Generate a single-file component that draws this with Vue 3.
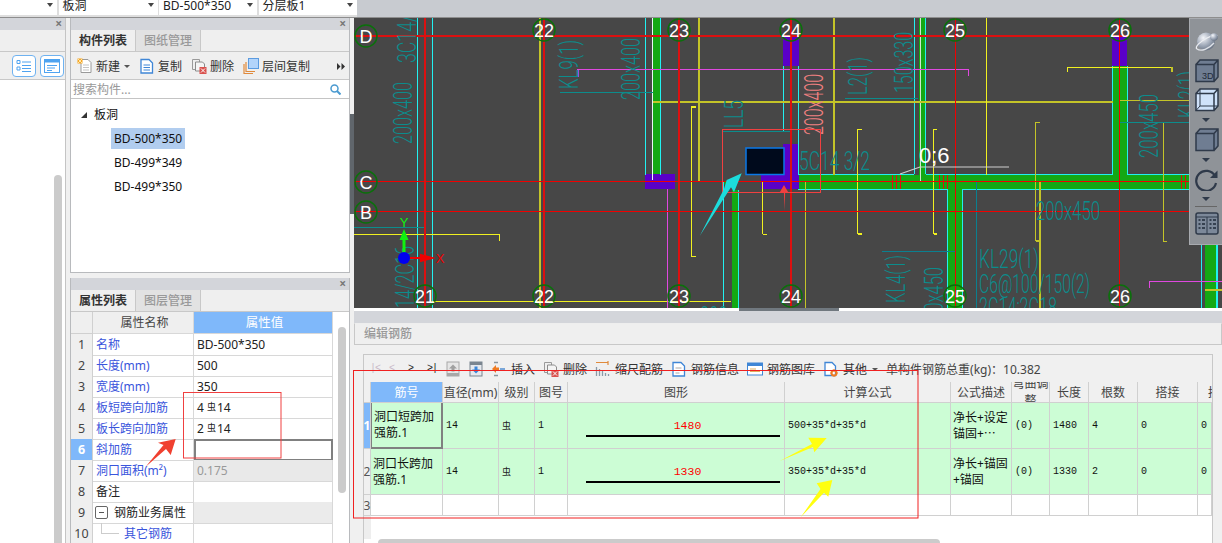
<script setup>
const red = "#dc1010";
const cyan = "#22f0f0";
const yellow = "#f0f020";
const olive = "#c4c428";
const teal = "#0c8c8c";
const pink = "#e048e0";

const dropdowns = [
  { text: "", w: 57 },
  { text: "板洞", w: 99 },
  { text: "BD-500*350", w: 98 },
  { text: "分层板1", w: 98 },
];

const icons = {
  add: '<path d="M4 1.5h7l3 3v10H4z" fill="#fff" stroke="#9a9a9a"/><path d="M6 7h6M6 9.500h6M6 12h6" stroke="#c4c4c4"/><rect x="0.500" y="0.500" width="5" height="5" fill="#f6a623"/><path d="M1 1l4 4M5 1L1 5" stroke="#ffe6a8"/>',
  copy: '<path d="M2 1.500h8l3.500 3.500v10H2z" fill="#fff" stroke="#3f86d6" stroke-width="1.300"/><path d="M4.500 7h6.500M4.500 9.500h6.500M4.500 12h6.500" stroke="#3f86d6"/>',
  del: '<path d="M1.500 1.500h7v10h-7z" fill="none" stroke="#9a9a9a"/><path d="M4.500 4h7l2 2v7h-9z" fill="#f4f4f4" stroke="#8c8c8c"/><rect x="8.500" y="9" width="7" height="7" fill="#d9534f"/><path d="M10 10.500l4 4M14 10.500l-4 4" stroke="#fff"/>',
  floor: '<path d="M1 6v9.500h9M3 4v9.500h9" fill="none" stroke="#e08a3c" stroke-width="1.200"/><rect x="5.500" y="0.500" width="10" height="10" fill="#b3d4fa" stroke="#5b9be0"/>',
  up: '<rect x="1" y="1" width="12" height="14" fill="#e6e6e6" stroke="#a8a8a8"/><rect x="1" y="12" width="12" height="3" fill="#a8a8a8"/><path d="M7 3.500l4 4H8.500v3h-3v-3H3z" fill="#a0a0a0"/>',
  down: '<rect x="1" y="1" width="12" height="14" fill="#e6e9ee" stroke="#7a8590"/><rect x="1" y="1" width="12" height="3" fill="#7a8590"/><path d="M7 12.500l4-4H8.500v-3h-3v3H3z" fill="#3b86d8"/>',
  insert: '<path d="M3 1.500h4M3 14.500h4" stroke="#8a96a0" stroke-width="1.300"/><path d="M1 8l4-4v2.500h3v3H5V12z" fill="#ef7b22"/><path d="M9 8h5" stroke="#7aa6d8" stroke-width="2"/>',
  scale: '<path d="M1 1.500h12M13 0v4" stroke="#e08a3c" stroke-width="1.200"/><path d="M1.500 6v9M4.500 8v7M7.500 10v5M10.500 12v3M13.500 13v2" stroke="#8a9aa8" stroke-width="1.300"/>',
  info: '<path d="M2 1.500h8l3.500 3.500v10H2z" fill="#fff" stroke="#3f86d6" stroke-width="1.300"/><path d="M4.500 7h6M4.500 9.500h6M4.500 12h4" stroke="#a8a8a8"/>',
  lib: '<rect x="0.500" y="2" width="15" height="12" fill="#fff" stroke="#3f86d6"/><rect x="0.500" y="2" width="15" height="3" fill="#3f86d6"/><path d="M3 8h6M3 10.500h10" stroke="#e0b060"/>',
  other: '<path d="M2 1.500h7l3.500 3.500v9.500H2z" fill="#fff" stroke="#3f86d6" stroke-width="1.300"/><circle cx="11" cy="12" r="2.500" fill="none" stroke="#ef7b22" stroke-width="2"/><path d="M11 8.500v1M11 14.500v1M7.500 12h1M13.500 12h1" stroke="#ef7b22" stroke-width="1.500"/>',
};

const compTools = [
  { icon: "add", text: "新建", caret: true },
  { icon: "copy", text: "复制" },
  { icon: "del", text: "删除" },
  { icon: "floor", text: "层间复制" },
];

const barTools = [
  { icon: "insert", text: "插入" },
  { icon: "del", text: "删除" },
  { icon: "scale", text: "缩尺配筋" },
  { icon: "info", text: "钢筋信息" },
  { icon: "lib", text: "钢筋图库" },
  { icon: "other", text: "其他", caret: true },
];

const attrs = [
  { name: "名称", value: "BD-500*350", blue: true },
  { name: "长度(mm)", value: "500", blue: true },
  { name: "宽度(mm)", value: "350", blue: true },
  { name: "板短跨向加筋", before: "4", after: "14", blue: true },
  { name: "板长跨向加筋", before: "2", after: "14", blue: true },
  { name: "斜加筋", value: "", blue: true, active: true },
  { name: "洞口面积(m²)", value: "0.175", blue: true, locked: true },
  { name: "备注", value: "" },
  { name: "钢筋业务属性", value: "", group: true },
  { name: "其它钢筋", value: "", blue: true, child: true },
];

const headers = ["", "筋号", "直径(mm)", "级别", "图号", "图形", "计算公式", "公式描述", "弯曲调整", "长度", "根数", "搭接", "损耗"];

const bars = [
  { id: 1, name: "洞口短跨加强筋.1", dia: "14", no: "1", len: "1480", formula: "500+35*d+35*d", desc: "净长+设定锚固+⋯", adj: "(0)", count: "4" },
  { id: 2, name: "洞口长跨加强筋.1", dia: "14", no: "1", len: "1330", formula: "350+35*d+35*d", desc: "净长+锚固+锚固", adj: "(0)", count: "2" },
];

// drawing, in page coordinates: x1 y1 x2 y2 colour width
const lines = [
  [417.5, 18, 417.5, 308, cyan, 1], [432.5, 18, 432.5, 308, cyan, 1],
  [645.5, 18, 645.5, 175, cyan, 1], [652, 18, 652, 180, "#e8f8f8", 1], [660.5, 18, 660.5, 175, cyan, 1],
  [723.5, 182, 723.5, 308, cyan, 1], [738.5, 190, 738.5, 308, cyan, 1],
  [783.5, 66, 783.5, 132, cyan, 1], [798.5, 66, 798.5, 175, cyan, 1],
  [914.5, 18, 914.5, 174, cyan, 1], [925.5, 18, 925.5, 174, cyan, 1], [920, 18, 920, 181, "#d0e8d0", 1],
  [1112.5, 66, 1112.5, 175, cyan, 1], [1127.5, 66, 1127.5, 175, cyan, 1],
  [947.5, 189, 947.5, 308, cyan, 1.5], [962.5, 189, 962.5, 308, cyan, 1.5],
  [798, 174.5, 914, 174.5, cyan, 1], [926, 174.5, 1112, 174.5, cyan, 1], [1128, 174.5, 1189, 174.5, cyan, 1],
  [798, 189.5, 947, 189.5, cyan, 1], [963, 189.5, 1189, 189.5, cyan, 1],
  [1201.5, 245, 1201.5, 308, cyan, 1.5], [1217, 245, 1217, 308, cyan, 1.5],

  [540, 18, 540, 308, olive, 2], [699, 18, 699, 181, olive, 1.5], [834, 18, 834, 175, olive, 1.5],
  [653, 102, 1113, 102, olive, 1.5], [1120, 100.5, 1189, 100.5, olive, 1.5],
  [986.5, 18, 986.5, 175, yellow, 1],
  [805.5, 182, 805.5, 308, olive, 1.5], [1040, 182, 1040, 308, olive, 1.5],
  [1035.5, 122, 1035.5, 241, olive, 1.5], [1035.5, 122.5, 1040, 122.5, olive, 1.5], [1035.5, 241, 1040, 241, olive, 1.5],
  [1163.5, 122, 1163.5, 241, olive, 1.5], [1163, 122, 1167, 122, olive, 1], [1163, 241, 1167, 241, olive, 1],
  [857.5, 129, 857.5, 234, yellow, 1], [857.5, 129.5, 862, 129.5, yellow, 1], [857.5, 234, 862, 234, yellow, 1.5],
  [933.5, 129, 933.5, 234, yellow, 1], [933.5, 129.5, 937, 129.5, yellow, 1], [933.5, 234, 937, 234, yellow, 1.5],
  [691.5, 107, 691.5, 256, yellow, 1], [691, 107, 696, 107, yellow, 1.5], [691, 256.5, 696, 256.5, yellow, 1],
  [762.5, 182, 762.5, 234, yellow, 1], [762.5, 234, 767, 234, yellow, 1],
  [1067, 67.5, 1172, 67.5, yellow, 1], [1067.5, 67, 1067.5, 72, yellow, 1], [1172, 67, 1172, 72, olive, 1.5],
  [354, 234.5, 500, 234.5, yellow, 1], [499.5, 234, 499.5, 241, yellow, 1],
  [432, 301.5, 731, 301.5, yellow, 1], [1205, 290, 1222, 290, olive, 1.5],

  [578, 69.5, 968, 69.5, pink, 1], [578, 69, 578, 77, pink, 1.5], [968.5, 69, 968.5, 76, pink, 1],
  [667.5, 189, 667.5, 308, pink, 1], [1150, 281.5, 1222, 281.5, pink, 1], [1149.5, 281, 1149.5, 288, pink, 1],

  [560, 92.5, 653, 92.5, teal, 1], [845, 98.5, 918, 98.5, teal, 1], [354, 227.5, 425, 227.5, teal, 1],
  [722, 131.5, 790, 131.5, teal, 1], [1120, 122.5, 1189, 122.5, teal, 1],
  [976.5, 182, 976.5, 308, "#0a8090", 1], [882, 251.5, 955, 251.5, "#0a8090", 1],

  [354, 36, 1189, 36, red, 2], [354, 181.5, 1189, 181.5, "#f00000", 1], [354, 211.5, 1189, 211.5, "#f00000", 1],
  [425, 18, 425, 308, red, 2], [544, 18, 544, 308, red, 2], [679, 18, 679, 308, red, 2],
  [791, 18, 791, 308, red, 2], [955.5, 18, 955.5, 308, "#f00000", 1], [1119.5, 18, 1119.5, 308, "#f00000", 1],

  [892, 175, 892, 189, red, 1], [896, 175, 896, 189, red, 1], [900, 175, 900, 189, red, 1],
  [939.5, 175, 939.5, 189, red, 1], [943.5, 175, 943.5, 189, red, 1], [947.5, 175, 947.5, 189, red, 1],
  [1181.5, 175, 1181.5, 189, red, 1], [1185.5, 175, 1185.5, 189, red, 1],
];

const fills = [
  [653, 18, 8, 157, "#14a814"], [919, 18, 7, 157, "#14a814"], [1113, 66, 14, 109, "#14a814"],
  [799, 175, 390, 14, "#14a814"], [948, 189, 15, 119, "#14a814"], [732, 190, 6, 118, "#14a814"],
  [1205, 245, 11, 63, "#14a814"],
  [645, 174, 30, 15, "#5a00c8"], [783, 36, 16, 30, "#5a00c8"], [783, 144, 16, 45, "#5a00c8"],
  [761, 174, 30, 15, "#5a00c8"], [1112, 36, 15, 30, "#5a00c8"],
];

const tallText = [
  { t: "200x400", x: 412, y: 144, len: 62 },
  { t: "3C14/", x: 416, y: 63, len: 48 },
  { t: "14/2C16", x: 414, y: 308, len: 62 },
  { t: "KL9(1)", x: 578, y: 89, len: 49 },
  { t: "200x400", x: 640, y: 100, len: 62 },
  { t: "LL5", x: 743, y: 128, len: 28 },
  { t: "200x400", x: 823, y: 135, len: 61, fill: "#f08080" },
  { t: "L2(1)", x: 867, y: 95, len: 38 },
  { t: "150x330", x: 913, y: 93, len: 61 },
  { t: "KL2(1)", x: 1197, y: 118, len: 47 },
  { t: "200x450", x: 1158, y: 158, len: 64 },
  { t: "KL4(1)", x: 905, y: 303, len: 48 },
  { t: "200x450", x: 943, y: 330, len: 63 },
];

const flatText = [
  { t: "5C14 3/2", x: 799, y: 170, len: 71 },
  { t: "200x450", x: 1036, y: 220, len: 64 },
  { t: "KL29(1)", x: 979, y: 268, len: 60 },
  { t: "C6@100/150(2)", x: 979, y: 293, len: 111 },
  { t: "2C14;2C18", x: 979, y: 316, len: 78 },
  { t: "200x", x: 700, y: 325, len: 36 },
];

const bubbles = [
  { t: "22", x: 544, y: 30 }, { t: "23", x: 679, y: 30 }, { t: "24", x: 791, y: 30 }, { t: "25", x: 955, y: 30 }, { t: "26", x: 1120, y: 30 },
  { t: "21", x: 425, y: 296 }, { t: "22", x: 544, y: 296 }, { t: "23", x: 679, y: 296 }, { t: "24", x: 791, y: 296 }, { t: "25", x: 955, y: 296 }, { t: "26", x: 1120, y: 296 },
  { t: "D", x: 366, y: 36 }, { t: "C", x: 366, y: 182 }, { t: "B", x: 366, y: 212 },
];
</script>

<template>
  <div class="app">
    <div class="topbar">
      <div class="dd-group">
        <div v-for="d in dropdowns" :key="d.w + d.text" class="dd" :style="{ width: d.w + 'px' }">
          <span>{{ d.text }}</span><i class="caret"></i>
        </div>
      </div>
    </div>

    <div class="main">
      <div class="stub">
        <div class="title"><span class="close">×</span></div>
        <div class="stub-tabs"></div>
        <div class="stub-tools">
          <button class="view-btn">
            <svg width="16" height="14" viewBox="0 0 16 14"><path d="M1 1.500h3v3H1zM1 8h3v3H1z" fill="none" stroke="#4fa3f0"/><path d="M6 3h9M6 9.500h9M6 6.500h9M6 12.500h9" stroke="#4fa3f0"/></svg>
          </button>
          <button class="view-btn">
            <svg width="16" height="14" viewBox="0 0 16 14"><rect x="0.500" y="0.500" width="15" height="13" fill="none" stroke="#4fa3f0"/><rect x="0.500" y="0.500" width="15" height="3" fill="#4fa3f0"/><path d="M3 6.500h10M3 9h8M3 11.500h5" stroke="#4fa3f0"/></svg>
          </button>
        </div>
        <div class="stub-body"><div class="stub-thumb"></div></div>
      </div>

      <div class="side">
        <section class="panel comp-panel">
          <div class="title"><span class="close">×</span></div>
          <div class="tabs">
            <span class="tab on">构件列表</span><span class="tab">图纸管理</span>
          </div>
          <div class="comp-tools">
            <div v-for="t in compTools" :key="t.text" class="tool">
              <svg width="16" height="16" viewBox="0 0 16 16" v-html="icons[t.icon]"></svg>
              <span>{{ t.text }}</span>
              <i v-if="t.caret" class="caret small"></i>
            </div>
            <svg class="more" width="8" height="7" viewBox="0 0 8 7"><path d="M0 0l3.500 3.500L0 7zM4.500 0L8 3.500 4.500 7z" fill="#333"/></svg>
          </div>
          <div class="search">
            <span>搜索构件...</span>
            <svg width="11" height="11" viewBox="0 0 11 11"><circle cx="4.500" cy="4.500" r="3.500" fill="none" stroke="#4a9ad0" stroke-width="1.500"/><path d="M7 7l3.500 3.500" stroke="#4a9ad0" stroke-width="2"/></svg>
          </div>
          <div class="tree">
            <div class="tree-root"><i class="tri"></i>板洞</div>
            <div class="tree-item"><span class="sel">BD-500*350</span></div>
            <div class="tree-item"><span>BD-499*349</span></div>
            <div class="tree-item"><span>BD-499*350</span></div>
          </div>
        </section>

        <section class="panel attr-panel">
          <div class="title"><span class="close">×</span></div>
          <div class="tabs">
            <span class="tab on">属性列表</span><span class="tab">图层管理</span>
          </div>
          <div class="attr-wrap">
            <div class="attr-table">
              <div class="attr-row head">
                <div class="idx"></div>
                <div class="cell nm">属性名称</div>
                <div class="cell val-head">属性值</div>
              </div>
              <div v-for="(a, i) in attrs" :key="a.name" class="attr-row">
                <div class="idx" :class="{ 'idx-on': a.active }">{{ i + 1 }}</div>
                <div class="cell name" :class="{ blue: a.blue, group: a.group, child: a.child }">
                  <i v-if="a.group" class="minus"></i>
                  <i v-if="a.child" class="branch"></i>
                  {{ a.name }}
                </div>
                <div class="cell value" :class="{ active: a.active, locked: a.locked, 'group-val': a.group }">
                  <template v-if="a.before">{{ a.before }}<span class="steel">虫</span>{{ a.after }}</template>
                  <template v-else>{{ a.value }}</template>
                </div>
              </div>
            </div>
            <div class="attr-scroll"><div class="attr-thumb"></div></div>
          </div>
        </section>
      </div>

      <div class="splitter"><div class="grip"></div></div>

      <div class="work">
        <div class="canvas">
          <svg class="drawing" width="868" height="290" viewBox="354 18 868 290">
            <rect x="354" y="18" width="868" height="290" fill="#474747" />
            <rect v-for="(f, i) in fills" :key="'f' + i" :x="f[0]" :y="f[1]" :width="f[2]" :height="f[3]" :fill="f[4]" />
            <line v-for="(l, i) in lines" :key="'l' + i" :x1="l[0]" :y1="l[1]" :x2="l[2]" :y2="l[3]" :stroke="l[4]" :stroke-width="l[5]" shape-rendering="crispEdges" />
            <path d="M900 174l20-7h89" fill="none" stroke="#d0d0d0" stroke-width="1.200" />
            <rect x="746" y="148" width="38" height="26.500" fill="#000a1c" stroke="#0a78e8" stroke-width="1.500" />
            <path d="M724 182l6-1.500-4 8z" fill="#14a814" />

            <g class="cad-text">
              <text v-for="(r, i) in tallText" :key="'r' + i" :transform="`translate(${r.x} ${r.y}) rotate(-90)`" :textLength="r.len" lengthAdjust="spacingAndGlyphs" :fill="r.fill || teal">{{ r.t }}</text>
              <text v-for="(r, i) in flatText" :key="'t' + i" :x="r.x" :y="r.y" :textLength="r.len" lengthAdjust="spacingAndGlyphs" :fill="teal">{{ r.t }}</text>
            </g>

            <g v-for="b in bubbles" :key="b.t + b.x + b.y">
              <circle :cx="b.x" :cy="b.y" r="11" fill="none" stroke="#0a700a" stroke-width="1.500" />
              <text class="bubble" :x="b.x" :y="b.y + 6.500" text-anchor="middle">{{ b.t }}</text>
            </g>

            <text class="dim" x="919" y="163">0;6</text>

            <path d="M402.500 258v-18h-3l4.500-11 4.500 11h-3v18z" fill="#10f010" />
            <path d="M404 258h17v-3l11 3-11 3v-3z" fill="#f00000" stroke="#f00000" stroke-width="2" />
            <circle cx="404" cy="258" r="6" fill="#0000f0" />
            <text class="axis" x="404" y="227" text-anchor="middle" fill="#10f010">Y</text>
            <text class="axis" x="440" y="263" text-anchor="middle" fill="#f00000">X</text>

            <rect x="722.500" y="129.500" width="98" height="63" fill="none" stroke="#f04040" />
            <path d="M699.700 236L724 189l2.700-9 15-6.700-7.700 19-3-5z" fill="#1cdcdc" />
            <path d="M784.700 210.700l-.8-18h-4.400l4.500-7.700 4.500 7.700h-3.400z" fill="#f04040" />
          </svg>

          <div class="view-tools">
            <svg width="24" height="22" viewBox="0 0 24 22">
              <defs>
                <radialGradient id="ball" cx=".35" cy=".3" r=".85">
                  <stop offset="0" stop-color="#f4f6fa" />
                  <stop offset=".55" stop-color="#98a2b2" />
                  <stop offset="1" stop-color="#566070" />
                </radialGradient>
              </defs>
              <circle cx="11" cy="11.500" r="9" fill="url(#ball)" />
              <path d="M2 19c-3-2 4-8 10-11s10-4 10-2" fill="none" stroke="#eceef2" stroke-width="1.300" />
              <path d="M2 19c4 3 12 0 17-6" fill="none" stroke="#dfe2e8" stroke-width="1.300" />
              <circle cx="19" cy="7" r="3.800" fill="url(#ball)" />
            </svg>
            <svg width="24" height="24" viewBox="0 0 24 24"><path d="M1 5.500h18v17H1zM1 5.500l4-4.500h18v17l-4 4.500M19 5.500L23 1" fill="#6f7d92" stroke="#2f3a4a" stroke-width="1.500"/><text x="7" y="20" class="box-text">3D</text></svg>
            <svg width="24" height="24" viewBox="0 0 24 24"><path d="M1 5.500h18v17H1zM1 5.500l4-4.500h18v17l-4 4.500M19 5.500L23 1" fill="#cfe2fa" stroke="#2f3a4a" stroke-width="1.500"/><path d="M1 22.500l4-4.500h18M5 1v17" fill="none" stroke="#2f3a4a"/></svg>
            <i class="tb-caret"></i>
            <svg width="24" height="24" viewBox="0 0 24 24"><path d="M1 5.500h18v17H1zM1 5.500l4-4.500h18v17l-4 4.500M19 5.500L23 1" fill="#6f7d92" stroke="#2f3a4a" stroke-width="1.500"/></svg>
            <i class="tb-caret"></i>
            <svg width="24" height="22" viewBox="0 0 24 22"><path d="M20 7a10 10 0 1 0 1 7" fill="none" stroke="#2f3a4a" stroke-width="2.200"/><path d="M22.500 1.500v7.500h-7.500z" fill="#2f3a4a"/></svg>
            <i class="tb-caret"></i>
            <div class="tb-sep"></div>
            <svg width="24" height="23" viewBox="0 0 24 23"><rect x="1" y="1" width="22" height="21" rx="2" fill="#7c8899" stroke="#2f3a4a" stroke-width="1.500"/><path d="M1 5h22M12 5v17" stroke="#2f3a4a"/><path d="M3.500 8h2M7 8h3M3.500 12h2M7 12h3M3.500 16h2M7 16h3M14.500 8h2M18 8h3M14.500 12h2M18 12h3M14.500 16h2M18 16h3" stroke="#1f2a38" stroke-width="1.300"/></svg>
          </div>
        </div>

        <div class="hbar"><div class="hgrip"></div></div>
        <div class="title small-title"></div>
        <div class="edit-name">编辑钢筋</div>

        <div class="edit-body">
          <div class="frame">
            <div class="bar-tools">
              <span class="nav dim-nav">|&lt;</span>
              <span class="nav dim-nav">&lt;</span>
              <span class="nav">&gt;</span>
              <span class="nav">&gt;|</span>
              <svg width="14" height="16" viewBox="0 0 14 16" v-html="icons.up"></svg>
              <svg width="14" height="16" viewBox="0 0 14 16" v-html="icons.down"></svg>
              <div v-for="t in barTools" :key="t.text + t.icon" class="tool">
                <svg width="16" height="16" viewBox="0 0 16 16" v-html="icons[t.icon]"></svg>
                <span>{{ t.text }}</span>
                <i v-if="t.caret" class="caret small"></i>
              </div>
              <span class="total">单构件钢筋总重(kg)：10.382</span>
            </div>

            <div class="g-row g-head">
              <div v-for="(h, i) in headers" :key="i" class="g-cell" :class="{ 'g-active': i === 1, 'g-wrap': i === 8, 'g-cut': i === 12 }">
                <span>{{ h }}</span>
              </div>
            </div>

            <div v-for="(b, i) in bars" :key="b.id" class="g-row g-data">
              <div class="g-cell g-idx" :class="{ 'idx-on': i === 0 }">{{ b.id }}</div>
              <div class="g-cell g-name" :class="{ 'g-sel': i === 0 }">{{ b.name }}</div>
              <div class="g-cell mono">{{ b.dia }}</div>
              <div class="g-cell"><span class="steel flat">虫</span></div>
              <div class="g-cell mono">{{ b.no }}</div>
              <div class="g-cell g-shape">
                <span class="shape-len">{{ b.len }}</span>
                <i class="shape-line"></i>
              </div>
              <div class="g-cell mono">{{ b.formula }}</div>
              <div class="g-cell g-name">{{ b.desc }}</div>
              <div class="g-cell mono">{{ b.adj }}</div>
              <div class="g-cell mono">{{ b.len }}</div>
              <div class="g-cell mono">{{ b.count }}</div>
              <div class="g-cell mono">0</div>
              <div class="g-cell mono">0</div>
            </div>

            <div class="g-row g-empty">
              <div class="g-cell g-idx">3</div>
              <div v-for="n in 12" :key="n" class="g-cell"></div>
            </div>

            <div class="filler"></div>
            <div class="frame-scroll"></div>
          </div>
        </div>
      </div>
    </div>

    <svg class="notes" width="1222" height="543" viewBox="0 0 1222 543">
      <rect x="183.500" y="392.500" width="97.500" height="65.500" fill="none" stroke="#f04040" />
      <rect x="353.500" y="370.500" width="564.500" height="147.500" fill="none" stroke="#f02020" />
      <path d="M145.700 466.700L163.500 445l-5.500-2.300 17.700-3.700-5 16-4.700-6z" fill="#f04030" />
      <path d="M779.700 461L812 444l-3.700-6.300 18.400.3-12.400 14.300-1.300-5.300z" fill="#ffff10" />
      <path d="M800.700 517.300L820.500 489l-3.800-5.700 15.600-3.300-4 16.700-4.300-4z" fill="#ffff10" />
    </svg>
  </div>
</template>

<style scoped>
.app {
  position: relative;
  width: 1222px;
  height: 543px;
  overflow: hidden;
  display: flex;
  flex-direction: column;
  background: #f0f0f0;
  color: #222;
  font: 12px "Noto Sans", "Noto Sans CJK SC", sans-serif;
}

.topbar {
  height: 18px;
  flex: none;
  background: #c8cbd0;
  border-bottom: 1px solid #8e8e8e;
  box-sizing: border-box;
}
.dd-group {
  width: 357px;
  height: 17px;
  display: flex;
  gap: 1.500px;
  background: #dedede;
  padding-bottom: 2px;
  box-sizing: border-box;
}
.dd {
  height: 15px;
  background: #fff;
  padding-left: 4px;
  box-sizing: border-box;
  display: flex;
  align-items: center;
  justify-content: space-between;
  line-height: 10px;
  overflow: hidden;
}
.dd span {
  position: relative;
  top: -2px;
}
.caret {
  width: 0;
  height: 0;
  border: 3.500px solid transparent;
  border-top: 4px solid #444;
  border-bottom: 0;
  margin: -6px 4px 0 0;
}
.caret.small {
  border-width: 3px 3px 0;
  border-top-color: #555;
  margin: 1px 0 0 1px;
}

.main {
  flex: 1;
  min-height: 0;
  display: flex;
}

.title {
  height: 12px;
  flex: none;
  background: #d3d5da;
  display: flex;
  justify-content: flex-end;
  align-items: center;
  padding-right: 3px;
}
.close {
  color: #777;
  font-size: 12px;
  font-weight: 700;
  line-height: 12px;
}

.stub {
  width: 66px;
  flex: none;
  display: flex;
  flex-direction: column;
  border-right: 1px solid #c4c4c4;
  box-sizing: border-box;
  background: #fff;
}
.stub-tabs {
  height: 21px;
  flex: none;
  background: #efefef;
  border-bottom: 1px solid #c8c8c8;
}
.stub-tools {
  height: 28px;
  flex: none;
  background: #efefef;
  border-bottom: 1px solid #c8c8c8;
  padding: 3px 0 0 12px;
  display: flex;
  gap: 4px;
  box-sizing: border-box;
}
.view-btn {
  width: 24px;
  height: 22px;
  padding: 0;
  background: #fff;
  border: 1px solid #6fb2f0;
  border-radius: 4px;
  display: flex;
  align-items: center;
  justify-content: center;
}
.stub-body {
  flex: 1;
  min-height: 0;
  overflow: hidden;
  padding: 95px 0 0 54px;
}
.stub-thumb {
  width: 8px;
  height: 400px;
  background: #cbcbcb;
  border-radius: 4px;
}

.side {
  width: 280px;
  flex: none;
  margin-left: 4px;
  display: flex;
  flex-direction: column;
  gap: 5px;
}
.panel {
  border: 1px solid #b8babd;
  border-top: 0;
  box-sizing: border-box;
  display: flex;
  flex-direction: column;
  background: #fff;
}
.comp-panel {
  height: 255px;
}
.attr-panel {
  flex: 1;
  min-height: 0;
  border-bottom: 0;
}

.tabs {
  height: 22px;
  flex: none;
  display: flex;
  background: #efefef;
  border-bottom: 1px solid #c8c8c8;
  box-sizing: border-box;
}
.tab {
  width: 65px;
  text-align: center;
  line-height: 21px;
  color: #999;
  font-weight: 500;
  background: #e2e2e2;
  border-right: 1px solid #c8c8c8;
  box-sizing: border-box;
}
.tab.on {
  color: #333;
  background: #efefef;
  font-weight: 700;
}

.comp-tools {
  height: 28px;
  flex: none;
  background: #efefef;
  border-bottom: 1px solid #c8c8c8;
  box-sizing: border-box;
  display: flex;
  align-items: center;
  gap: 9px;
  padding: 1px 0 0 6px;
}
.tool {
  display: flex;
  align-items: center;
  gap: 3px;
  color: #333;
}
.more {
  margin-left: auto;
  margin-right: 4px;
}

.search {
  height: 19px;
  flex: none;
  border-bottom: 1px solid #c4c4c4;
  box-sizing: border-box;
  display: flex;
  align-items: center;
  justify-content: space-between;
  padding: 0 8px 0 2px;
  color: #999;
}

.tree {
  flex: 1;
  padding-top: 5px;
  color: #111;
}
.tree-root {
  height: 22px;
  line-height: 22px;
  padding-left: 10px;
  display: flex;
  align-items: center;
  gap: 7px;
}
.tri {
  width: 0;
  height: 0;
  border-left: 6px solid transparent;
  border-bottom: 6px solid #333;
}
.tree-item {
  height: 24px;
  padding-left: 40px;
  display: flex;
  align-items: center;
}
.tree-item span {
  padding: 0 3px;
  height: 21px;
  line-height: 21px;
}
.tree-item .sel {
  background: #b1cdef;
}

.attr-wrap {
  flex: 1;
  min-height: 0;
  display: flex;
  overflow: hidden;
}
.attr-table {
  width: 262px;
  flex: none;
}
.attr-row {
  display: grid;
  grid-template-columns: 22px 101px 139px;
  height: 21px;
}
.attr-row.head {
  height: 22px;
}
.idx {
  background: #efefef;
  border-right: 1px solid #d0d0d0;
  border-bottom: 1px solid #d0d0d0;
  text-align: center;
  line-height: 21px;
  font-size: 12.500px;
  color: #444;
  box-sizing: border-box;
}
.idx-on {
  background: #7fb8fa;
  color: #fff;
  font-weight: 700;
}
.cell {
  border-right: 1px solid #d8d8d8;
  border-bottom: 1px solid #d8d8d8;
  box-sizing: border-box;
  line-height: 21px;
  padding-left: 3px;
  white-space: nowrap;
  overflow: hidden;
}
.nm {
  background: #efefef;
  text-align: center;
  color: #444;
}
.val-head {
  background: #7fb8fa;
  color: #fff;
  text-align: center;
  font-size: 12.500px;
}
.name.blue {
  color: #3a55dc;
}
.name.group {
  display: flex;
  align-items: center;
  gap: 6px;
  padding-left: 2px;
}
.name.child {
  padding-left: 31px;
  position: relative;
}
.minus {
  width: 11px;
  height: 11px;
  border: 1px solid #666;
  border-radius: 2px;
  flex: none;
  background: linear-gradient(#555, #555) center / 5px 1px no-repeat;
}
.branch {
  position: absolute;
  left: 8px;
  top: 0;
  width: 17px;
  height: 10px;
  border-left: 1px solid #ccc;
  border-bottom: 1px solid #ccc;
}
.value.active {
  border: 2px solid #808080;
}
.value.locked {
  background: #e9e9e9;
  color: #999;
}
.value.group-val {
  background: #ebebeb;
}
.steel {
  font-size: 9px;
  position: relative;
  top: -2px;
  margin: 0 1px 0 3px;
}
.steel.flat {
  top: 0;
  margin: 0;
}

.attr-scroll {
  flex: 1;
  padding: 15px 0 0 5px;
}
.attr-thumb {
  width: 8px;
  height: 166px;
  background: #cbcbcb;
  border-radius: 4px;
}

.splitter {
  width: 4px;
  flex: none;
  padding-top: 96px;
}
.grip {
  height: 100px;
  background: #60666c;
}

.work {
  width: 868px;
  flex: none;
  display: flex;
  flex-direction: column;
}

.canvas {
  position: relative;
  height: 290px;
  flex: none;
  overflow: hidden;
}
.drawing {
  display: block;
}
.cad-text text {
  font: 300 25px Roboto, "Liberation Sans", sans-serif;
}
.bubble {
  fill: #fff;
  font: 18px "Liberation Sans", sans-serif;
}
.dim {
  fill: #fff;
  font: 22px "Liberation Sans", sans-serif;
}
.axis {
  font: 13px "Liberation Sans", sans-serif;
}

.view-tools {
  position: absolute;
  right: 0;
  top: 0;
  width: 33px;
  height: 227px;
  box-sizing: border-box;
  background: #8f9398;
  border: 1px solid #a8abb0;
  border-right: 0;
  display: flex;
  flex-direction: column;
  align-items: center;
  padding-top: 11px;
}
.view-tools svg {
  flex: none;
  margin-left: 2px;
}
.view-tools svg:nth-of-type(2) {
  margin-top: 7px;
}
.view-tools svg:nth-of-type(3) {
  margin-top: 5px;
}
.view-tools svg:nth-of-type(4) {
  margin-top: 6px;
}
.view-tools svg:nth-of-type(5) {
  margin-top: 7px;
}
.tb-caret {
  width: 0;
  height: 0;
  margin-top: 6px;
  border: 4px solid transparent;
  border-top: 4px solid #2f3a4a;
  border-bottom: 0;
}
.tb-sep {
  width: 22px;
  height: 1px;
  background: #666;
  margin: 5px 0;
}
.box-text {
  fill: #1f2a38;
  font: 9px "Liberation Sans", sans-serif;
}

.hbar {
  height: 3px;
  flex: none;
  background: #fff;
  padding-left: 385px;
}
.hgrip {
  width: 100px;
  height: 3px;
  background: #70787f;
}
.small-title {
  height: 12px;
}
.edit-name {
  height: 22px;
  flex: none;
  box-sizing: border-box;
  background: #efefef;
  border: 1px solid #c8c8c8;
  border-top-color: #eee;
  padding-left: 9px;
  line-height: 20px;
  color: #999;
  font-weight: 500;
}

.edit-body {
  flex: 1;
  min-height: 0;
  padding: 9px 9px 0;
  display: flex;
  background: #f0f0f0;
}
.frame {
  flex: 1;
  min-width: 0;
  border: 1px solid #c8c8c8;
  border-bottom: 0;
  background: #fff;
  display: flex;
  flex-direction: column;
  overflow: hidden;
}
.bar-tools {
  height: 27px;
  flex: none;
  background: #f0f0f0;
  display: flex;
  align-items: center;
  gap: 9px;
  padding-left: 6px;
  white-space: nowrap;
}
.bar-tools .tool {
  gap: 4px;
  margin-left: -1px;
}
.nav {
  font: 10px "Liberation Mono", monospace;
  color: #222;
  width: 12px;
  margin-right: -2px;
  letter-spacing: -1px;
}
.dim-nav {
  color: #c8b8c8;
}
.total {
  color: #444;
  margin-left: -1px;
}

.g-row {
  display: grid;
  grid-template-columns: 7px 72px 56px 36px 33px 217px 166px 61px 38px 39px 49px 60px 14px;
  flex: none;
}
.g-head {
  height: 21px;
  background: #f0f0f0;
}
.g-data {
  height: 46px;
  background: #ccfdd5;
}
.g-empty {
  height: 21px;
  background: #fff;
}
.g-cell {
  border-right: 1px solid #d0d0d0;
  border-bottom: 1px solid #d0d0d0;
  box-sizing: border-box;
  display: flex;
  align-items: center;
  padding-left: 3px;
  overflow: hidden;
  min-width: 0;
}
.g-head .g-cell {
  justify-content: center;
  padding: 0;
  color: #444;
  white-space: nowrap;
}
.g-head .g-active {
  background: #7fb8fa;
  color: #fff;
}
.g-head .g-wrap {
  white-space: normal;
  line-height: 17px;
  text-align: center;
}
.g-head .g-cut {
  justify-content: flex-start;
  padding-left: 10px;
  border-right: 0;
}
.g-idx {
  background: #f0f0f0;
  padding: 0;
  justify-content: center;
  color: #555;
  overflow: visible;
}
.g-idx.idx-on {
  background: #7fb8fa;
  color: #fff;
  font-weight: 700;
}
.g-name {
  line-height: 16px;
  color: #111;
  word-break: break-all;
  padding-left: 2px;
}
.g-sel {
  border: 2px solid #808080;
  border-top: 0;
  border-left-width: 1px;
}
.mono {
  font: 10px "Liberation Mono", monospace;
  color: #111;
}
.g-shape {
  flex-direction: column;
  align-items: stretch;
  justify-content: center;
  padding: 4px 4px 0 18px;
  gap: 3px;
}
.shape-len {
  font: 11.500px "Liberation Mono", monospace;
  color: #f00;
  text-align: center;
  padding-left: 9px;
}
.shape-line {
  height: 2px;
  flex: none;
  background: #000;
}
.filler {
  flex: 1;
  border-left: 7px solid #eee;
}
.frame-scroll {
  height: 4px;
  flex: none;
  width: 562px;
  margin-left: 14px;
  background: #cbcbcb;
  border-radius: 4px 4px 0 0;
}

.notes {
  position: absolute;
  left: 0;
  top: 0;
  pointer-events: none;
}
</style>
